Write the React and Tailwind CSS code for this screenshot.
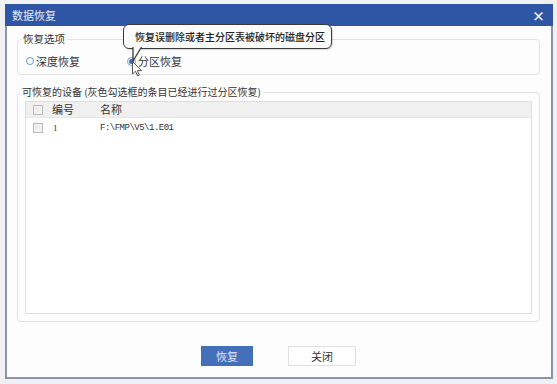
import React from "react";

const font = { fontFamily: '"Noto Sans CJK SC", "Noto Sans", sans-serif' };

function Check() {
  return (
    <span className="inline-block w-[10px] h-[10px] border border-[#b8b8b8] bg-gradient-to-br from-[#e4e4e4] to-[#fafafa] shadow-[inset_0_0_0_1px_#f4f4f4]" />
  );
}

export default function App() {
  return (
    <div className="relative w-[557px] h-[384px] bg-[#f1f1f3] overflow-hidden text-[11px] text-[#333]" style={font}>
      <div className="absolute left-[5px] top-[4px] w-[548px] h-[375px] flex flex-col">
        <div className="h-[22px] bg-[#2f55a5] flex items-center justify-between pl-[7px] pr-[8px] text-white">
          <span className="text-[11px] leading-none text-[#e8ecf7]">数据恢复</span>
          <span className="text-[13px] font-bold leading-none">×</span>
        </div>
        <div className="flex-1 bg-[#fdfdfd] border-x-2 border-b-2 border-[#8c94ab] pl-[10px] pr-[11px] flex flex-col">
          <fieldset className="mt-[6px] border border-[#e2e2e2] rounded-[4px] pl-[8px] pr-2 pb-[6px]">
            <legend className="-ml-[5px] px-[2px] leading-[14px] text-[10.5px] text-[#333]">恢复选项</legend>
            <div className="mt-[8px] h-[14px] flex items-center">
              <span className="w-[8px] h-[8px] rounded-full border border-[#6d94cc] bg-white" />
              <span className="ml-[2px] leading-none">深度恢复</span>
              <span className="ml-[47px] w-[9px] h-[9px] rounded-full border border-[#7c9bcf] bg-white flex items-center justify-center">
                <span className="w-[5px] h-[5px] rounded-full bg-[#3b6dc0]" />
              </span>
              <span className="ml-[2px] leading-none">分区恢复</span>
            </div>
          </fieldset>
          <fieldset className="mt-[10px] border border-[#e2e2e2] rounded-[4px] px-[7px] pb-[7px]">
            <legend className="-ml-[5px] px-[2px] leading-[14px] text-[10px] text-[#333]">可恢复的设备 (灰色勾选框的条目已经进行过分区恢复)</legend>
            <div className="mt-[2px] h-[213px] border border-[#dedede] bg-white">
              <div className="h-[16px] bg-[#f0f0f0] border-b border-[#e6e6e6] flex items-center pl-[7px]">
                <Check />
                <span className="ml-[9px] w-[48px] leading-none">编号</span>
                <span className="leading-none">名称</span>
              </div>
              <div className="h-[18px] flex items-center pl-[7px] mt-[1px]">
                <Check />
                <span className="ml-[10px] w-[47px] leading-none text-[9px]" style={{ fontFamily: '"Liberation Serif", serif' }}>1</span>
                <span className="leading-none text-[9px] tracking-[-0.5px]" style={{ fontFamily: '"Liberation Mono", monospace' }}>F:\FMP\V5\1.E01</span>
              </div>
            </div>
          </fieldset>
          <div className="mt-[24px] flex justify-center gap-[35px]">
            <button className="w-[52px] h-[20px] bg-[#4470bb] text-[#dfe6f5] text-[11px] leading-none">恢复</button>
            <button className="w-[68px] h-[20px] bg-white border border-[#e0e0e0] text-[#333] text-[11px] leading-none">关闭</button>
          </div>
        </div>
      </div>

      {/* tooltip */}
      <div className="absolute left-[123px] top-[24px] w-[209px] h-[25px] rounded-[6px] border-[1.5px] border-[#3a3a3a] bg-[#fbfbfb] flex items-center pl-[11px] text-[10px] text-[#222] font-medium leading-none whitespace-nowrap shadow-[1px_1px_1px_rgba(0,0,0,0.15)]">
        恢复误删除或者主分区表被破坏的磁盘分区
      </div>
      <svg className="absolute left-[128px] top-[46px]" width="20" height="20" viewBox="0 0 20 20">
        <path d="M5 0 L5 15 L14 0 Z" fill="#fbfbfb" />
        <path d="M5 1 L5 15 L13.5 1" fill="none" stroke="#3a3a3a" strokeWidth="1.3" />
      </svg>
      {/* cursor */}
      <svg className="absolute left-[132px] top-[61px]" width="12" height="18" viewBox="0 0 12 18">
        <path d="M0.5 0.5 L0.5 13 L3.5 10.2 L5.6 15 L7.4 14.2 L5.4 9.6 L9.5 9.6 Z" fill="#fff" stroke="#555" strokeWidth="1" strokeLinejoin="round" />
      </svg>
    </div>
  );
}
